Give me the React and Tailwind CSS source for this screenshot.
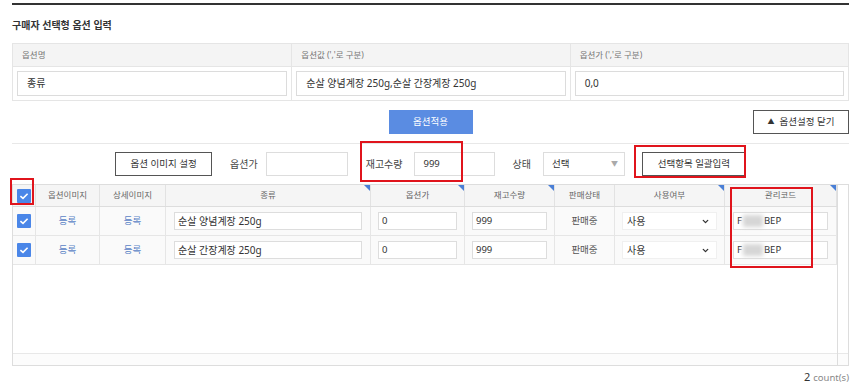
import React from 'react'
import { ChevronDown } from 'lucide-react'

const Check = () => (
    <svg width="14" height="14" viewBox="0 0 14 14">
        <rect width="14" height="14" rx="1" fill="#4a86e8" />
        <path d="M3.4 7.1 L6 9.4 L10.6 4.7" stroke="#fff" strokeWidth="1.6" fill="none" />
    </svg>
)

// little blue marker on editable header cells
const Corner = () => (
    <span className="absolute top-0 right-0 border-t-[6px] border-l-[6px] border-t-[#4a7fd6] border-l-transparent" />
)

const cols = 'grid grid-cols-[23px_64px_66px_205px_94px_90px_60px_110px_112px]'

const heads = [
    { label: '', corner: false },
    { label: '옵션이미지', corner: false },
    { label: '상세이미지', corner: false },
    { label: '종류', corner: true },
    { label: '옵션가', corner: true },
    { label: '재고수량', corner: true },
    { label: '판매상태', corner: false },
    { label: '사용여부', corner: true },
    { label: '관리코드', corner: true },
]

const rows = [
    { name: '순살 양념계장 250g', price: '0', stock: '999' },
    { name: '순살 간장계장 250g', price: '0', stock: '999' },
]

const App = () => {
    return (
        <div className="w-[860px] h-[386px] bg-white relative overflow-hidden text-[#333] font-['Noto_Sans','Noto_Sans_CJK_KR',sans-serif]">
            <div className="pl-[12px] pr-[11px] pt-[3px]">
                <div className="h-[2px] bg-[#333]" />
                <h2 className="mt-[13px] text-[10px] leading-[14px] font-bold">구매자 선택형 옵션 입력</h2>

                <div className="mt-[11px] grid grid-cols-3 border border-[#e5e5e5]">
                    {[
                        ['옵션명', '종류'],
                        ["옵션값 (','로 구분)", '순살 양념계장 250g,순살 간장계장 250g'],
                        ["옵션가 (','로 구분)", '0,0'],
                    ].map(([h, v], i) => (
                        <div key={h} className={i ? 'border-l border-[#e5e5e5]' : ''}>
                            <div className="h-[23px] bg-[#f4f4f4] border-b border-[#e5e5e5] flex items-center pl-[9px] text-[8.5px] text-[#777]">{h}</div>
                            <div className="h-[33px] px-[4px] py-[4px]">
                                <div className="h-[25px] border border-[#dcdcdc] bg-white flex items-center pl-[9px] text-[10px]">{v}</div>
                            </div>
                        </div>
                    ))}
                </div>

                <div className="mt-[9px] grid grid-cols-[1fr_auto_1fr] items-start">
                    <div />
                    <button className="w-[84px] h-[24px] bg-[#5a8ce2] text-white text-[9.5px]">옵션적용</button>
                    <button className="justify-self-end w-[96px] h-[24px] border border-[#555] bg-white text-[9.5px] flex items-center justify-center gap-[5px]">
                        <span className="text-[7px]">▲</span>옵션설정 닫기
                    </button>
                </div>

                <div className="mt-[9px] border-t border-[#e8e8e8]" />

                <div className="mt-[8px] flex justify-center items-center h-[24px] text-[10px]">
                    <button className="w-[97px] h-[24px] border border-[#555] bg-white text-[9.5px]">옵션 이미지 설정</button>
                    <span className="ml-[18px] text-[#444]">옵션가</span>
                    <div className="ml-[8px] w-[82px] h-[24px] border border-[#ddd] bg-white" />
                    <span className="ml-[18px] text-[#444]">재고수량</span>
                    <div className="ml-[11px] w-[81px] h-[24px] border border-[#ddd] bg-white flex items-center pl-[9px] text-[9.5px]">999</div>
                    <span className="ml-[18px] text-[#444]">상태</span>
                    <div className="ml-[12px] w-[82px] h-[24px] border border-[#ddd] bg-white flex items-center justify-between pl-[8px] pr-[6px] text-[9.5px]">
                        선택<span className="text-[7px] text-[#aaa]">▼</span>
                    </div>
                    <button className="ml-[17px] w-[104px] h-[24px] border border-[#555] bg-white text-[9.5px]">선택항목 일괄입력</button>
                </div>

                <div className="mt-[8px] h-[182px] border border-[#ddd] flex">
                    <div className="flex-1 flex flex-col">
                        <div className={`${cols} h-[22px] bg-[#f5f5f5] border-b border-[#ddd]`}>
                            {heads.map((h, i) => (
                                <div key={i} className="relative border-r border-[#e2e2e2] flex items-center justify-center text-[8.5px] text-[#666]">
                                    {i === 0 ? <Check /> : h.label}
                                    {h.corner && <Corner />}
                                </div>
                            ))}
                        </div>
                        {rows.map((r, i) => (
                            <div key={i} className={`${cols} h-[29px] bg-[#fafafa] border-b border-[#e6e6e6] text-[9.5px]`}>
                                <div className="border-r border-[#e6e6e6] flex items-center justify-center"><Check /></div>
                                <div className="border-r border-[#e6e6e6] flex items-center justify-center text-[#5b84c6]">등록</div>
                                <div className="border-r border-[#e6e6e6] flex items-center justify-center text-[#5b84c6]">등록</div>
                                <div className="border-r border-[#e6e6e6] flex items-center px-[8px]">
                                    <div className="w-full h-[18px] border border-[#ddd] bg-white flex items-center pl-[3px] text-[10px]">{r.name}</div>
                                </div>
                                <div className="border-r border-[#e6e6e6] flex items-center px-[7px]">
                                    <div className="w-full h-[18px] border border-[#ddd] bg-white flex items-center pl-[3px]">{r.price}</div>
                                </div>
                                <div className="border-r border-[#e6e6e6] flex items-center px-[7px]">
                                    <div className="w-full h-[18px] border border-[#ddd] bg-white flex items-center pl-[3px]">{r.stock}</div>
                                </div>
                                <div className="border-r border-[#e6e6e6] flex items-center justify-center text-[#555]">판매중</div>
                                <div className="border-r border-[#e6e6e6] flex items-center px-[7px]">
                                    <div className="w-full h-[18px] border border-[#f0f0f0] bg-white flex items-center justify-between pl-[4px] pr-[6px] text-[10px]">
                                        사용<ChevronDown size={9} strokeWidth={3.5} color="#333" />
                                    </div>
                                </div>
                                <div className="border-r border-[#e6e6e6] flex items-center px-[8px]">
                                    <div className="w-full h-[18px] border border-[#ddd] bg-white flex items-center pl-[3px]">
                                        F<span className="inline-block w-[20px] h-[12px] bg-[#d6d6d6] blur-[2px] mx-[1px]" />BEP
                                    </div>
                                </div>
                            </div>
                        ))}
                        <div className="flex-1" />
                        <div className="h-[12px] border-t border-[#e8e8e8] bg-[#fcfcfc]" />
                    </div>
                    <div className="w-[11px] border-l border-[#ddd] flex flex-col">
                        <div className="flex-1" />
                        <div className="h-[12px] border-t border-[#e8e8e8] bg-[#fcfcfc]" />
                    </div>
                </div>

                <div className="mt-[4px] flex justify-end items-baseline gap-[3px] leading-[14px]">
                    <span className="text-[11px] text-[#333]">2</span>
                    <span className="text-[9.5px] text-[#888]">count(s)</span>
                </div>
            </div>

            {/* red highlight marks drawn over the form */}
            <div className="absolute left-[360px] top-[141px] w-[103px] h-[41px] border-2 border-[#e0141c]" />
            <div className="absolute left-[634px] top-[145px] w-[112px] h-[33px] border-2 border-[#e0141c]" />
            <div className="absolute left-[10px] top-[178px] w-[24px] h-[27px] border-2 border-[#e0141c]" />
            <div className="absolute left-[730px] top-[187px] w-[83px] h-[81px] border-2 border-[#e0141c]" />
        </div>
    )
}

export default App
